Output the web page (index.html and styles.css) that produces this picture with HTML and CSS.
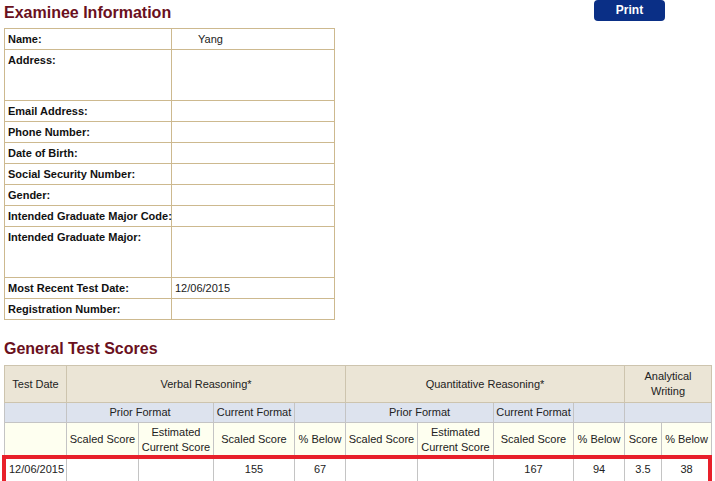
FILE: index.html
```html
<!DOCTYPE html>
<html>
<head>
<meta charset="utf-8">
<link rel="stylesheet" href="styles.css">
</head>
<body>
<div class="page">
  <div class="topbar">
    <h2 class="title">Examinee Information</h2>
    <button class="print">Print</button>
  </div>
  <table class="info">
    <colgroup><col class="c-label"><col class="c-val"></colgroup>
    <tr><th>Name:</th><td class="name">Yang</td></tr>
    <tr class="tall"><th>Address:</th><td></td></tr>
    <tr><th>Email Address:</th><td></td></tr>
    <tr><th>Phone Number:</th><td></td></tr>
    <tr><th>Date of Birth:</th><td></td></tr>
    <tr><th>Social Security Number:</th><td></td></tr>
    <tr><th>Gender:</th><td></td></tr>
    <tr><th>Intended Graduate Major Code:</th><td></td></tr>
    <tr class="tall"><th>Intended Graduate Major:</th><td></td></tr>
    <tr><th>Most Recent Test Date:</th><td>12/06/2015</td></tr>
    <tr><th>Registration Number:</th><td></td></tr>
  </table>

  <h2 class="title scores-title">General Test Scores</h2>
  <div class="scores-wrap">
    <table class="scores">
      <colgroup>
        <col class="w62"><col class="w72"><col class="w75"><col class="w81"><col class="w51">
        <col class="w72"><col class="w76"><col class="w80"><col class="w51"><col class="w37"><col class="w50">
      </colgroup>
      <tr class="h1">
        <td>Test Date</td>
        <td colspan="4">Verbal Reasoning*</td>
        <td colspan="4">Quantitative Reasoning*</td>
        <td colspan="2" class="aw">Analytical Writing</td>
      </tr>
      <tr class="h2">
        <td></td>
        <td colspan="2">Prior Format</td>
        <td>Current Format</td>
        <td></td>
        <td colspan="2">Prior Format</td>
        <td>Current Format</td>
        <td></td>
        <td colspan="2"></td>
      </tr>
      <tr class="h3">
        <td></td>
        <td>Scaled Score</td>
        <td>Estimated Current Score</td>
        <td>Scaled Score</td>
        <td>% Below</td>
        <td>Scaled Score</td>
        <td>Estimated Current Score</td>
        <td>Scaled Score</td>
        <td>% Below</td>
        <td>Score</td>
        <td>% Below</td>
      </tr>
      <tr class="data">
        <td class="date">12/06/2015</td>
        <td></td><td></td><td>155</td><td>67</td>
        <td></td><td></td><td>167</td><td>94</td><td>3.5</td><td>38</td>
      </tr>
    </table>
    <div class="highlight"></div>
  </div>
</div>
</body>
</html>
```

FILE: styles.css
```css
html, body {
  margin: 0;
  padding: 0;
  background: #fff;
}
body {
  font-family: "Liberation Sans", Arial, sans-serif;
  color: #1a1a1a;
}
.page {
  padding: 0 0 0 4px;
  width: 708px;
}
.topbar {
  display: flex;
  justify-content: space-between;
  align-items: flex-start;
  height: 28px;
}
.title {
  margin: 0;
  font-size: 16px;
  font-weight: bold;
  color: #6a1020;
  line-height: 18px;
  padding-top: 4px;
}
.print {
  margin: 0 47px 0 0;
  width: 71px;
  height: 21px;
  border: none;
  border-radius: 4px;
  background: #0a2f86;
  color: #fff;
  font-family: "Liberation Sans", Arial, sans-serif;
  font-weight: bold;
  font-size: 12px;
  padding: 0 0 2px 0;
}
.info {
  border-collapse: collapse;
  table-layout: fixed;
  width: 331px;
  font-size: 11px;
}
.info .c-label { width: 167px; }
.info th, .info td {
  border: 1px solid #cdb98f;
  height: 20px;
  padding: 0 3px;
  vertical-align: middle;
  text-align: left;
  white-space: nowrap;
}
.info th {
  font-weight: bold;
  color: #111;
}
.info td.name {
  padding-left: 26px;
}
.info tr.tall th, .info tr.tall td {
  height: 46px;
  vertical-align: top;
  padding-top: 4px;
}
.scores-title {
  margin-top: 20px;
  padding-top: 0;
}
.scores-wrap {
  position: relative;
  margin-top: 7px;
}
.scores {
  border-collapse: collapse;
  table-layout: fixed;
  width: 707px;
  font-size: 11px;
  color: #222;
}
.w62 { width: 62px; }
.w72 { width: 72px; }
.w75 { width: 75px; }
.w81 { width: 81px; }
.w51 { width: 51px; }
.w76 { width: 76px; }
.w80 { width: 80px; }
.w37 { width: 37px; }
.w50 { width: 50px; }
.scores td {
  border: 1px solid #c4c4c4;
  text-align: center;
  vertical-align: middle;
  padding: 0 2px;
  line-height: 15px;
}
.scores tr.h1 td {
  background: #ebe5d6;
  height: 36px;
  border-color: #cdc4ae;
}
.scores tr.h1 td.aw {
  padding: 0 14px;
}
.scores tr.h2 td {
  background: #dde3ee;
  height: 19px;
}
.scores tr.h3 td {
  background: #fefff0;
  height: 33px;
}
.scores tr.data td {
  background: #fff;
  height: 24px;
}
.scores tr.data td.date {
  text-align: left;
  padding-left: 4px;
}
.highlight {
  position: absolute;
  left: -2px;
  top: 90px;
  width: 702px;
  height: 24px;
  border: 4px solid #e8202a;
  box-sizing: content-box;
  pointer-events: none;
}
```
